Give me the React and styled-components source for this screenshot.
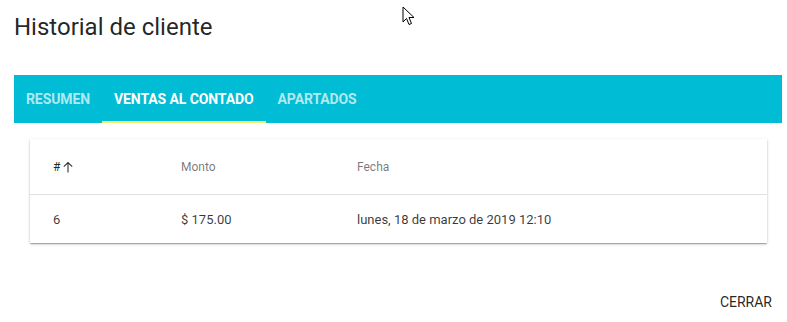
import React, { useState } from 'react';
import styled, { createGlobalStyle } from 'styled-components';

const GlobalStyle = createGlobalStyle`
  body {
    margin: 0;
    background: #fff;
    font-family: Roboto, "Liberation Sans", sans-serif;
  }
`;

const Dialog = styled.div`
  position: relative;
  width: 787px;
  height: 322px;
  box-sizing: border-box;
  padding: 0 5px 0 14px;
  display: flex;
  flex-direction: column;
`;

const Title = styled.h2`
  margin: 0;
  padding: 13px 0 0 0;
  height: 75px;
  box-sizing: border-box;
  font-size: 24px;
  font-weight: 400;
  color: rgba(0, 0, 0, 0.87);
  line-height: 28px;
`;

const TabBar = styled.div`
  display: flex;
  height: 48px;
  background: #00bcd4;
`;

const Tab = styled.button`
  border: none;
  background: transparent;
  padding: 2px 12px 0;
  height: 48px;
  font-family: Roboto, "Liberation Sans", sans-serif;
  font-size: 14px;
  font-weight: 700;
  letter-spacing: -0.1px;
  color: ${({ active }) => (active ? '#fff' : 'rgba(255, 255, 255, 0.7)')};
  border-bottom: 2px solid ${({ active }) => (active ? '#f4ee6e' : 'transparent')};
  box-sizing: border-box;
  cursor: pointer;
`;

const Content = styled.div`
  padding: 16px 15px 0 16px;
`;

const Card = styled.div`
  background: #fff;
  box-shadow: 0 1px 3px rgba(0, 0, 0, 0.2), 0 1px 1px rgba(0, 0, 0, 0.14), 0 2px 1px -1px rgba(0, 0, 0, 0.12);
`;

const Row = styled.div`
  display: grid;
  grid-template-columns: 128px 176px 1fr;
  align-items: center;
  height: ${({ head }) => (head ? '56px' : '48px')};
  padding-left: 23px;
  border-bottom: ${({ head }) => (head ? '1px solid rgba(224, 224, 224, 1)' : 'none')};
  box-sizing: border-box;
  font-size: ${({ head }) => (head ? '12px' : '13px')};
  font-weight: 400;
  color: ${({ head }) => (head ? 'rgba(0, 0, 0, 0.54)' : 'rgba(0, 0, 0, 0.78)')};
`;

const Sort = styled.span`
  display: inline-flex;
  align-items: center;
  gap: 2px;
  color: rgba(0, 0, 0, 0.87);
`;

const Actions = styled.div`
  display: flex;
  justify-content: flex-end;
  margin-top: auto;
  padding: 0 5px 2px 0;
`;

const FlatButton = styled.button`
  border: none;
  background: transparent;
  padding: 0 5px;
  height: 36px;
  font-family: Roboto, "Liberation Sans", sans-serif;
  font-size: 14px;
  font-weight: 400;
  color: rgba(0, 0, 0, 0.87);
  cursor: pointer;
`;

const Pointer = styled.svg`
  position: absolute;
  left: 402px;
  top: 6px;
`;

const tabs = ['RESUMEN', 'VENTAS AL CONTADO', 'APARTADOS'];

export default function App() {
  const [tab, setTab] = useState(1);
  return (
    <Dialog>
      <GlobalStyle />
      <Title>Historial de cliente</Title>
      <TabBar>
        {tabs.map((t, i) => (
          <Tab key={t} active={i === tab} onClick={() => setTab(i)}>{t}</Tab>
        ))}
      </TabBar>
      <Content>
        <Card>
          <Row head>
            <Sort>
              #
              <svg width="12" height="12" viewBox="0 0 12 12">
                <path d="M6 1.5v10M1.8 5.7L6 1.5l4.2 4.2" fill="none" stroke="rgba(0,0,0,0.8)" strokeWidth="1.1" />
              </svg>
            </Sort>
            <span>Monto</span>
            <span>Fecha</span>
          </Row>
          <Row>
            <span>6</span>
            <span>$ 175.00</span>
            <span>lunes, 18 de marzo de 2019 12:10</span>
          </Row>
        </Card>
      </Content>
      <Actions>
        <FlatButton>CERRAR</FlatButton>
      </Actions>
      <Pointer width="14" height="20" viewBox="0 0 14 20">
        <path d="M1 1v15l3.5-3.5 2.5 6 2.5-1-2.5-6H12z" fill="#fff" stroke="#000" strokeWidth="1" strokeLinejoin="round" />
      </Pointer>
    </Dialog>
  );
}
